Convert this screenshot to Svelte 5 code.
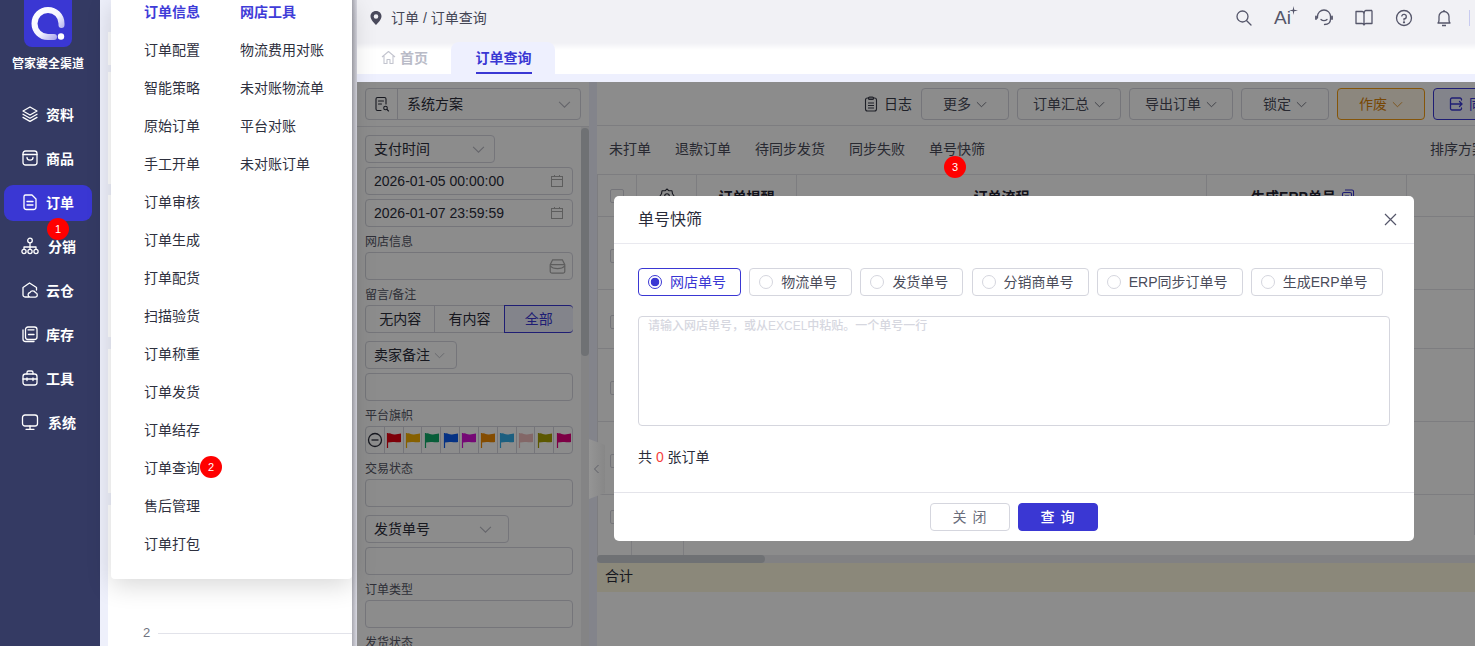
<script>
  const navItems = [
    { t: '资料', i: 'layers' }, { t: '商品', i: 'bag' }, { t: '订单', i: 'doc', active: true },
    { t: '分销', i: 'tree', shift: true }, { t: '云仓', i: 'cloud' }, { t: '库存', i: 'stock' },
    { t: '工具', i: 'box' }, { t: '系统', i: 'screen', shift: true }
  ];
  const menuA = ['订单信息','订单配置','智能策略','原始订单','手工开单','订单审核','订单生成','打单配货','扫描验货','订单称重','订单发货','订单结存','订单查询','售后管理','订单打包'];
  const menuB = ['网店工具','物流费用对账','未对账物流单','平台对账','未对账订单'];
  const flags = ['#e60012','#f5b000','#0fa968','#0a5cf0','#d60fd6','#f08a00','#33aeea','#eebcbc','#a8a000','#e4007f'];
  const radios = ['网店单号','物流单号','发货单号','分销商单号','ERP同步订单号','生成ERP单号'];
  const tools = ['更多','订单汇总','导出订单','锁定'];
  const subTabs = ['未打单','退款订单','待同步发货','同步失败','单号快筛'];
  const rows = [true,false,true,true,false];
</script>

<div class="page">
  <aside class="side">
    <div class="logo">
      <svg width="48" height="47" viewBox="0 0 48 47">
        <defs><linearGradient id="lg" x1="0" y1="0" x2="1" y2="1"><stop offset="0" stop-color="#ffffff"/><stop offset=".55" stop-color="#f4f4ff"/><stop offset="1" stop-color="#9d9ae8"/></linearGradient></defs>
        <path d="M0 0H48V39a8 8 0 0 1-8 8H8a8 8 0 0 1-8-8Z" fill="#3a37d3"/>
        <path d="M37.500 25V23.500A13.500 13.500 0 1 0 24 37H30" fill="none" stroke="url(#lg)" stroke-width="6" stroke-linecap="round"/>
        <circle cx="37" cy="36.500" r="3.200" fill="#fff"/>
      </svg>
    </div>
    <div class="brand">管家婆全渠道</div>
    <nav class="nav">
      {#each navItems as n}
        <div class="nav-item" class:active={n.active} class:shift={n.shift}>
          <svg class="nav-ic" width="18" height="18" viewBox="0 0 18 18" fill="none" stroke="#fff" stroke-width="1.300" stroke-linejoin="round" stroke-linecap="round">
            {#if n.i === 'layers'}
              <path d="M9 2 16 6 9 10 2 6Z"/><path d="M2 9.200 9 13.200 16 9.200"/><path d="M2 12.400 9 16.400 16 12.400"/>
            {:else if n.i === 'bag'}
              <rect x="2" y="2" width="14" height="14" rx="2.500"/><path d="M2 5.500H16"/><path d="M6 8.500C6 12 12 12 12 8.500"/>
            {:else if n.i === 'doc'}
              <path d="M4.500 2H11L15 6V14A2.500 2.500 0 0 1 12.500 16.500H5.500A2.500 2.500 0 0 1 3 14V3.500A1.500 1.500 0 0 1 4.500 2Z"/><path d="M6 8.500H12M6 12H12"/>
            {:else if n.i === 'tree'}
              <circle cx="9" cy="3.500" r="2.300"/><circle cx="3" cy="14.500" r="2.100"/><circle cx="9" cy="14.500" r="2.100"/><circle cx="15" cy="14.500" r="2.100"/><path d="M9 5.800V12.400M3 12.400V10H15V12.400"/>
            {:else if n.i === 'cloud'}
              <path d="M8 16H4A2 2 0 0 1 2 14V6.500L8.500 2 15.500 6.500V9"/><path d="M9 16.200H14.500A2.300 2.300 0 0 0 14.500 11.700 3 3 0 0 0 9 11.500 2.400 2.400 0 0 0 9 16.200Z"/>
            {:else if n.i === 'stock'}
              <path d="M2 5V14A2.500 2.500 0 0 0 4.500 16.500H13"/><rect x="4.500" y="2" width="11.500" height="12.500" rx="2.500"/><path d="M7.500 9.500H13"/><path d="M7 4.800H13"/>
            {:else if n.i === 'box'}
              <rect x="2" y="5" width="14" height="11" rx="2.500"/><path d="M6 5V3.500A1.500 1.500 0 0 1 7.500 2H10.500A1.500 1.500 0 0 1 12 3.500V5"/><path d="M2 10H16M6 9V11.500M12 9V11.500"/>
            {:else}
              <rect x="1.500" y="2" width="15" height="11" rx="2.500"/><path d="M9 13V16M5 16.300H13"/>
            {/if}
          </svg>
          <span>{n.t}</span>
        </div>
      {/each}
    </nav>
  </aside>

  <section class="under">
    <div class="card c1"></div>
    <div class="card c2"></div>
    <div class="card c3"></div>
    <div class="card c4"></div>
    <div class="card c5">
      <div class="axis"><span>2</span><i></i></div>
    </div>
    <div class="menu">
      <div class="menu-col">
        {#each menuA as m, i}
          <div class="menu-item" class:head={i === 0}>{m}</div>
        {/each}
      </div>
      <div class="menu-col">
        {#each menuB as m, i}
          <div class="menu-item" class:head={i === 0}>{m}</div>
        {/each}
      </div>
    </div>
  </section>

  <main class="main">
    <header class="top">
      <div class="crumb">
        <svg width="14" height="16" viewBox="0 0 14 16"><path fill-rule="evenodd" d="M7 1C3.600 1 1.500 3.500 1.500 6.300 1.500 9.800 5.200 13.200 7 15 8.800 13.200 12.500 9.800 12.500 6.300 12.500 3.500 10.400 1 7 1ZM7 4.200A2.300 2.300 0 1 1 7 8.800 2.300 2.300 0 0 1 7 4.200Z" fill="#4a4a5c"/></svg>
        <span>订单 / 订单查询</span>
      </div>
      <div class="top-icons">
        <svg width="20" height="20" viewBox="0 0 20 20" fill="none" stroke="#55566a" stroke-width="1.300" stroke-linecap="round"><circle cx="8.500" cy="8.500" r="5.500"/><path d="M12.700 12.700 17 17"/></svg>
        <span class="ai">Ai<svg width="9" height="9" viewBox="0 0 9 9"><path d="M4.500 0 5.200 3.800 9 4.500 5.200 5.200 4.500 9 3.800 5.200 0 4.500 3.800 3.800Z" fill="#55566a"/></svg></span>
        <svg width="20" height="20" viewBox="0 0 20 20" fill="none" stroke="#55566a" stroke-width="1.300" stroke-linecap="round"><path d="M3.500 10V8.500A6.500 6.500 0 0 1 16.500 8.500V11C16.500 14.500 14 16.500 10.500 16.500"/><path d="M2 8.500V11M18 8.500V11" stroke-width="1.800"/><path d="M7 11.500C8.500 13 11.500 13 13 11.500"/></svg>
        <svg width="20" height="20" viewBox="0 0 20 20" fill="none" stroke="#55566a" stroke-width="1.300" stroke-linejoin="round"><path d="M2 3.500H8C9 3.500 10 4.200 10 5.500V17C10 16 9 15.500 8 15.500H2Z"/><path d="M18 2.500H12C11 2.500 10 4 10 5.500M18 2.500V15.500H12C11 15.500 10 16 10 17"/></svg>
        <svg width="20" height="20" viewBox="0 0 20 20" fill="none" stroke="#55566a" stroke-width="1.300" stroke-linecap="round"><circle cx="10" cy="10" r="7.500"/><path d="M7.800 8A2.300 2.300 0 1 1 10 11V12"/><circle cx="10" cy="14.300" r=".5" fill="#55566a"/></svg>
        <svg width="20" height="20" viewBox="0 0 20 20" fill="none" stroke="#55566a" stroke-width="1.300" stroke-linejoin="round"><path d="M4 15H16C15 14 15 13 15 12V8.500A5 5 0 0 0 5 8.500V12C5 13 5 14 4 15Z"/><path d="M10 2V3.500M8 17.500H12"/></svg>
        <i class="vr"></i>
      </div>
    </header>

    <div class="tabs">
      <div class="tab-home">
        <svg width="15" height="15" viewBox="0 0 15 15" fill="none" stroke="#c3c5cf" stroke-width="1.100" stroke-linejoin="round"><path d="M1 7 7.500 1.500 14 7M3 6V13.500H6V9.500H9V13.500H12V6"/></svg>
        <span>首页</span>
      </div>
      <div class="tab-on"><span>订单查询</span></div>
    </div>

    <div class="strip"></div>

    <div class="content">
      <div class="filters">
        <div class="f-head">
          <div class="plan">
            <span class="plan-ic">
              <svg width="16" height="16" viewBox="0 0 16 16" fill="none" stroke="#2a2c3a" stroke-width="1.100" stroke-linecap="round"><path d="M7 14.500H3.500A1.500 1.500 0 0 1 2 13V3A1.500 1.500 0 0 1 3.500 1.500H10.500A1.500 1.500 0 0 1 12 3V8"/><path d="M4.500 5H9.500M4.500 8H7.500"/><circle cx="11.500" cy="12" r="1.800"/><path d="M13 13.500 14.500 15"/></svg>
            </span>
            <span class="plan-t">系统方案</span>
            <svg class="chev lg" viewBox="0 0 12 12"><path d="M1 3.500 6 8.500 11 3.500"/></svg>
          </div>
        </div>
        <div class="f-body">
          <div class="f-scroll">
            <div class="sel s130"><span>支付时间</span><svg class="chev lg" viewBox="0 0 12 12"><path d="M1 3.500 6 8.500 11 3.500"/></svg></div>
            <div class="inp mt4"><span>2026-01-05 00:00:00</span><svg class="cal" viewBox="0 0 14 14" fill="none" stroke="#aaa" stroke-width="1"><rect x="1.500" y="2.500" width="11" height="10"/><path d="M1.500 5.500H12.500M4.500 1V3M9.500 1V3"/></svg></div>
            <div class="inp mt4"><span>2026-01-07 23:59:59</span><svg class="cal" viewBox="0 0 14 14" fill="none" stroke="#aaa" stroke-width="1"><rect x="1.500" y="2.500" width="11" height="10"/><path d="M1.500 5.500H12.500M4.500 1V3M9.500 1V3"/></svg></div>
            <div class="lab">网店信息</div>
            <div class="inp"><svg class="cal shop" viewBox="0 0 14 14" fill="none" stroke="#aaa" stroke-width="1"><path d="M3 1.500H11L13 5.500V11A1.500 1.500 0 0 1 11.500 12.500H2.500A1.500 1.500 0 0 1 1 11V5.500Z"/><path d="M1 5.500H13M1 6.500C3.500 9.500 10.500 9.500 13 6.500"/></svg></div>
            <div class="lab">留言/备注</div>
            <div class="seg"><span>无内容</span><span>有内容</span><span class="seg-on">全部</span></div>
            <div class="sel s92 mt8"><span>卖家备注</span><svg class="chev lt" viewBox="0 0 12 12"><path d="M1 3.500 6 8.500 11 3.500"/></svg></div>
            <div class="inp mt4"></div>
            <div class="lab">平台旗帜</div>
            <div class="flags">
              <span class="flag"><svg width="16" height="16" viewBox="0 0 16 16" fill="none" stroke="#2a2c3a" stroke-width="1.300"><circle cx="8" cy="8" r="6.500"/><path d="M4.500 8H11.500"/></svg></span>
              {#each flags as c}
                <span class="flag"><svg width="15" height="15" viewBox="0 0 15 15"><path d="M1.500 0V15" stroke={c} stroke-width="1.200"/><path d="M2 .5C5 -.5 6 2 9 1.500 11 1.200 13 1 15 .5V9C12 10 10 8.500 7 9 5 9.300 3.500 9.500 2 9.500Z" fill={c}/></svg></span>
              {/each}
            </div>
            <div class="lab">交易状态</div>
            <div class="inp"></div>
            <div class="sel s144 mt8"><span>发货单号</span><svg class="chev lg" viewBox="0 0 12 12"><path d="M1 3.500 6 8.500 11 3.500"/></svg></div>
            <div class="inp mt4"></div>
            <div class="lab">订单类型</div>
            <div class="inp"></div>
            <div class="lab">发货状态</div>
          </div>
          <div class="vbar"><i></i></div>
        </div>
      </div>

      <div class="gutter"></div>

      <div class="right">
        <div class="toolbar">
          <div class="log">
            <svg width="16" height="16" viewBox="0 0 16 16" fill="none" stroke="#3a3c4a" stroke-width="1.100"><rect x="2.500" y="2" width="11" height="13" rx="2"/><rect x="5.500" y="1" width="5" height="2.500" rx="1"/><path d="M5 7H11M5 9.500H11M5 12H11"/></svg>
            <span>日志</span>
          </div>
          {#each tools as b}
            <div class="btn"><span>{b}</span><svg class="chev" viewBox="0 0 12 12"><path d="M1 3.500 6 8.500 11 3.500"/></svg></div>
          {/each}
          <div class="btn warn"><span>作废</span><svg class="chev" viewBox="0 0 12 12"><path d="M1 3.500 6 8.500 11 3.500"/></svg></div>
          <div class="btn sync">
            <svg width="16" height="16" viewBox="0 0 16 16" fill="none" stroke="#3a37d3" stroke-width="1.300" stroke-linecap="round"><path d="M13.500 4V3.500A1.500 1.500 0 0 0 12 2H4A1.500 1.500 0 0 0 2.500 3.500V12.500A1.500 1.500 0 0 0 4 14H12A1.500 1.500 0 0 0 13.500 12.500V12"/><path d="M3 8H14M11.500 5.500 14 8 11.500 10.500"/></svg>
            <span>同步订单</span>
          </div>
        </div>

        <div class="subtabs">
          {#each subTabs as s}<span>{s}</span>{/each}
          <span class="sort">排序方案</span>
        </div>

        <div class="table">
          <div class="tr th">
            <div class="td"><i class="ck"></i></div>
            <div class="td">
              <svg width="16" height="16" viewBox="0 0 16 16" fill="none" stroke="#2a2c3a" stroke-width="1.100" stroke-linejoin="round"><path d="M8 1 10 2.800 13 2.800 13.500 5.800 15 8 13.500 10.200 13 13.200 10 13.200 8 15 6 13.200 3 13.200 2.500 10.200 1 8 2.500 5.800 3 2.800 6 2.800Z"/><circle cx="8" cy="8" r="2.300"/></svg>
            </div>
            <div class="td b">订单提醒</div>
            <div class="td b">订单流程</div>
            <div class="td b erp">生成ERP单号
              <svg class="copy" width="14" height="14" viewBox="0 0 14 14" fill="none" stroke="#3a37d3" stroke-width="1.100"><rect x="1.500" y="3.500" width="9" height="9.500" rx="1.500"/><path d="M4 1H11A1.500 1.500 0 0 1 12.500 2.500V10"/><path d="M4 7H8M4 9.500H8"/></svg>
            </div>
            <div class="td"></div>
          </div>
          {#each rows as tall, i}
            <div class="tr body" class:tall class:short={!tall} class:last={i === rows.length - 1}>
              <div class="td"><i class="ck"></i></div>
              <div class="td"></div><div class="td"></div><div class="td"></div><div class="td"></div><div class="td"></div>
            </div>
          {/each}
          <div class="hbar"><i></i></div>
          <div class="sum">合计</div>
        </div>
      </div>

      <div class="dim"></div>
      <svg class="handle" width="16" height="60" viewBox="0 0 16 60">
        <defs><linearGradient id="hg" x1="0" x2="1" y1="0" y2="0"><stop offset="0" stop-color="#959595"/><stop offset="1" stop-color="#878787"/></linearGradient></defs>
        <path d="M0 0 16 6V54L0 60Z" fill="url(#hg)"/>
        <path d="M9.500 26 5.500 30 9.500 34" fill="none" stroke="#5f6068" stroke-width="1"/>
      </svg>

      <div class="modal">
        <div class="m-head">
          <span>单号快筛</span>
          <svg width="13" height="13" viewBox="0 0 13 13" stroke="#55566a" stroke-width="1.200"><path d="M1 1 12 12M12 1 1 12"/></svg>
        </div>
        <div class="m-body">
          <div class="radios">
            {#each radios as r, i}
              <label class="radio" class:on={i === 0}><i class="dot"></i><span>{r}</span></label>
            {/each}
          </div>
          <div class="ta">请输入网店单号，或从EXCEL中粘贴。一个单号一行</div>
          <div class="count">共 <em>0</em> 张订单</div>
        </div>
        <div class="m-foot">
          <button class="mb">关 闭</button>
          <button class="mb pri">查 询</button>
        </div>
      </div>
    </div>
  </main>

  <span class="badge b1">1</span>
  <span class="badge b2">2</span>
  <span class="badge b3">3</span>
</div>

<style>
  :global(body) { margin: 0; }
  .page {
    position: relative; display: flex; width: 1475px; height: 646px; overflow: hidden;
    font-family: "Liberation Sans", "Noto Sans CJK SC", sans-serif; font-size: 14px; color: #2a2c3a; background: #fff;
  }
  .side { width: 100px; flex: none; background: #343a63; color: #fff; display: flex; flex-direction: column; align-items: center; }
  .logo { height: 47px; line-height: 0; margin-left: -4px; }
  .brand { margin-top: 9px; font-size: 12px; font-weight: 700; line-height: 17px; margin-left: -4px; }
  .nav { margin-top: 20px; align-self: stretch; display: flex; flex-direction: column; padding: 4px 8px 0 4px; gap: 8px; }
  .nav-item { height: 36px; box-sizing: border-box; padding-bottom: 2px; display: flex; align-items: center; padding-left: 17px; gap: 7px; border-radius: 9px; font-weight: 700; }
  .nav-item.shift span { margin-left: 2px; }
  .nav-item.active { background: #3a37d3; }
  .nav-ic { flex: none; }

  .under { position: relative; width: 257px; flex: none; background: #eef0fb; padding-left: 8px; box-sizing: border-box; display: flex; flex-direction: column; }
  .under::after { content: ""; position: absolute; top: 0; right: 0; bottom: 0; width: 5px; background: linear-gradient(90deg, #a9a9b1, #d9d9e2); }
  .card { background: #fff; }
  .c1 { height: 33px; margin-top: 32px; }
  .c2 { height: 112px; margin-top: 7px; }
  .c3 { height: 142px; margin-top: 11px; }
  .c4 { height: 144px; margin-top: 12px; }
  .c5 { flex: 1; margin-top: 12px; display: flex; flex-direction: column; justify-content: flex-end; }
  .axis { display: flex; align-items: center; padding: 0 0 5px 35px; gap: 8px; font-size: 13px; color: #70727e; line-height: 16px; }
  .axis i { flex: 1; height: 1px; background: #e2e3ea; }
  .menu {
    position: absolute; left: 11px; top: 0; width: 241px; height: 579px; background: #fff; z-index: 2;
    display: flex; padding-left: 33px; box-sizing: border-box; border-radius: 0 0 4px 4px;
    box-shadow: 0 6px 26px rgba(0,0,0,.16);
  }
  .menu-col { width: 96px; margin-top: -7px; }
  .menu-item { height: 38px; line-height: 38px; white-space: nowrap; color: #2e303e; }
  .menu-item.head { color: #3f3cd8; font-weight: 700; }

  .main { flex: 1; min-width: 0; display: flex; flex-direction: column; }
  .top { height: 43px; flex: none; background: #f1f1f5; display: flex; align-items: center; justify-content: space-between; padding-left: 12px; box-sizing: border-box; padding-bottom: 7px; }
  .crumb { display: flex; align-items: center; gap: 8px; color: #444655; }
  .crumb span { padding-bottom: 2px; }
  .top-icons { display: flex; align-items: center; gap: 20px; margin-right: -1px; }
  .top-icons > svg { display: block; }
  .ai { position: relative; width: 20px; font-size: 19px; line-height: 20px; color: #55566a; }
  .ai svg { position: absolute; right: -4px; top: -2px; }
  .vr { width: 1px; height: 16px; background: #c8cbf0; margin-left: -5px; margin-right: 6px; }

  .tabs { height: 31px; flex: none; display: flex; align-items: flex-end; background: linear-gradient(#f1f1f5, #fff 7px); padding-left: 24px; position: relative; }
  .tab-home { height: 31px; box-sizing: border-box; padding-bottom: 3px; display: flex; align-items: center; gap: 4px; width: 70px; color: #b9bbc7; font-weight: 700; }
  .tab-on { width: 104px; height: 32px; background: #eef0fe; border-radius: 8px 8px 0 0; display: flex; justify-content: center; margin-top: -1px; }
  .tab-on span { color: #3a37d3; font-weight: 700; line-height: 32px; height: 30px; border-bottom: 2px solid #3a37d3; margin-left: 1px; }
  .strip { height: 8px; flex: none; background: #eef0fe; }

  .content { position: relative; flex: 1; display: flex; min-height: 0; background: #fff; }
  .filters { width: 232px; flex: none; display: flex; flex-direction: column; min-height: 0; }
  .f-head { height: 45px; flex: none; box-sizing: border-box; padding: 6px 8px; border-bottom: 1px solid #e4e4ea; }
  .plan { height: 32px; box-sizing: border-box; border: 1px solid #d5d6de; border-radius: 4px; display: flex; align-items: center; padding-right: 9px; }
  .plan-ic { width: 31px; height: 30px; border-right: 1px solid #d5d6de; display: flex; align-items: center; justify-content: center; flex: none; }
  .plan-t { flex: 1; padding-left: 9px; padding-bottom: 2px; }
  .f-body { flex: 1; display: flex; min-height: 0; }
  .f-scroll { width: 224px; flex: none; box-sizing: border-box; padding: 8px 8px 0; overflow: hidden; }
  .vbar { width: 8px; background: #f0f0f3; }
  .vbar i { display: block; height: 228px; margin-top: 1px; background: #caced4; border-radius: 4px; }
  .sel, .inp, .seg, .flags { height: 28px; box-sizing: border-box; border: 1px solid #d5d6de; border-radius: 4px; display: flex; align-items: center; }
  .sel { padding: 0 9px 0 8px; justify-content: space-between; }
  .sel span { padding-bottom: 2px; }
  .s130 { width: 130px; }
  .s92 { width: 92px; padding-right: 11px; }
  .s144 { width: 144px; padding-right: 16px; }
  .inp { padding: 0 8px; justify-content: space-between; font-size: 14px; white-space: nowrap; }
  .mt4 { margin-top: 4px; }
  .mt8 { margin-top: 8px; }
  .cal { width: 14px; height: 14px; flex: none; margin-left: auto; }
  .shop { width: 17px; height: 17px; margin-right: -2px; }
  .lab { font-size: 12px; line-height: 17px; margin: 7px 0 1px; color: #555766; }
  .seg span { flex: 1; text-align: center; line-height: 26px; border-right: 1px solid #d5d6de; }
  .seg span:last-child { border-right: 0; }
  .seg .seg-on { height: 28px; margin: -1px; border: 1px solid #3a37d3; border-radius: 0 4px 4px 0; background: #eef0fe; color: #3a37d3; box-sizing: border-box; line-height: 26px; }
  .flag { flex: 1; height: 26px; display: flex; align-items: center; justify-content: center; border-right: 1px solid #d5d6de; }
  .flag:last-child { border-right: 0; }
  .chev { width: 11px; height: 11px; flex: none; fill: none; stroke: #6a6c7a; stroke-width: 1; }
  .chev.lt { stroke: #b8b9c2; }
  .chev.lg { width: 13px; height: 13px; stroke: #b8b9c2; }

  .gutter { width: 8px; flex: none; background: #eef0fe; }
  .right { flex: 1; min-width: 0; overflow: hidden; display: flex; flex-direction: column; }
  .toolbar { height: 44px; flex: none; box-sizing: border-box; border-bottom: 1px solid #e4e4ea; padding-top: 6px; display: flex; align-items: flex-start; justify-content: flex-end; gap: 8px; }
  .log { height: 32px; display: flex; align-items: center; gap: 5px; margin-right: 1px; color: #3a3c4a; }
  .log span { padding-bottom: 2px; }
  .btn { height: 32px; min-width: 88px; flex: none; box-sizing: border-box; padding: 0 15px; border: 1px solid #d5d6de; border-radius: 4px; display: flex; align-items: center; justify-content: center; gap: 5px; color: #4a4c5a; white-space: nowrap; }
  .btn span { padding-bottom: 2px; flex: none; }
  .btn svg { flex: none; }
  .btn.warn { background: #fff6e6; border-color: #f39c12; color: #d9820a; }
  .btn.warn .chev { stroke: #e0962c; }
  .btn.sync { border-color: #3a37d3; background: #eef0fe; color: #3a37d3; margin-right: -46px; justify-content: flex-start; padding-left: 14px; gap: 5px; overflow: hidden; width: 88px; }
  .subtabs { height: 49px; flex: none; box-sizing: border-box; border-bottom: 1px solid #e4e4ea; display: flex; align-items: center; padding: 0 0 4px 12px; gap: 24px; color: #4a4c5a; white-space: nowrap; }
  .sort { margin-left: 421px; }
  .table { flex: 1; min-height: 0; }
  .tr { display: grid; grid-template-columns: 39px 60px 100px 410px 200px 1fr; border-left: 1px solid #e4e4ea; box-sizing: border-box; border-bottom: 1px solid #e4e4ea; }
  .th { height: 42px; }
  .tall { height: 73px; }
  .short { height: 59px; }
  .last { height: 60px; border-bottom: 0; grid-template-columns: 34px 52px 87px 1fr; }
  .td { display: flex; align-items: center; justify-content: center; border-right: 1px solid #e4e4ea; white-space: nowrap; }
  .td.b { font-weight: 700; color: #1f2130; }
  .td.erp { padding-right: 7px; }
  .body .td:first-child { padding-top: 5px; }
  .last .td:first-child { justify-content: flex-start; padding-left: 12px; }
  .copy { margin-left: 5px; }
  .ck { width: 14px; height: 14px; box-sizing: border-box; border: 1px solid #d5d6de; border-radius: 2px; display: block; }
  .hbar { height: 8px; background: #ebecef; }
  .hbar i { display: block; width: 168px; height: 8px; border-radius: 4px; background: #caced4; }
  .sum { height: 29px; background: #fdf8df; line-height: 27px; padding-left: 8px; }

  .dim { position: absolute; inset: 0; background: rgba(0,0,0,.45); z-index: 3; }
  .handle { position: absolute; left: 232px; top: 357px; z-index: 4; }
  .modal { position: absolute; left: 257px; top: 114px; width: 800px; height: 345px; background: #fff; border-radius: 5px; z-index: 5; display: flex; flex-direction: column; }
  .m-head { height: 48px; flex: none; box-sizing: border-box; border-bottom: 1px solid #e9e9ef; display: flex; align-items: center; justify-content: space-between; padding: 0 17px 1px 25px; font-size: 16px; }
  .m-head span { padding-bottom: 2px; margin-left: -1px; }
  .m-body { flex: 1; padding: 24px 24px 0; }
  .radios { display: flex; gap: 8.200px; }
  .radio { height: 28px; box-sizing: border-box; border: 1px solid #d5d6de; border-radius: 4px; display: flex; align-items: center; padding: 0 14px 0 9px; gap: 8px; color: #4a4c5a; white-space: nowrap; }
  .radio span { padding-bottom: 2px; }
  .dot { width: 14px; height: 14px; box-sizing: border-box; border: 1px solid #d5d6de; border-radius: 50%; display: block; flex: none; }
  .radio.on { border-color: #3a37d3; color: #3a37d3; }
  .radio.on .dot { border-color: #3a37d3; background: radial-gradient(circle, #3a37d3 0 4px, #fff 4.600px); }
  .ta { height: 110px; box-sizing: border-box; margin-top: 20px; border: 1px solid #d5d6de; border-radius: 4px; padding: 2px 9px; font-size: 12px; font-weight: 500; line-height: 14px; color: #d6d7df; }
  .count { margin-top: 21px; line-height: 20px; }
  .count em { font-style: normal; color: #f5423c; }
  .m-foot { height: 49px; flex: none; box-sizing: border-box; border-top: 1px solid #e4e4ea; padding-top: 10px; display: flex; justify-content: center; gap: 8px; }
  .mb { width: 80px; height: 28px; box-sizing: border-box; border: 1px solid #d5d6de; border-radius: 4px; background: #fff; font: inherit; color: #6a6c7a; padding: 0 0 2px; letter-spacing: 1px; }
  .mb.pri { background: #3a37d3; border-color: #3a37d3; color: #fff; font-weight: 500; }

  .badge { position: absolute; width: 22px; height: 22px; border-radius: 50%; background: #ff0000; color: #fff; font-size: 11px; line-height: 22px; text-align: center; z-index: 9; font-family: "Liberation Sans", sans-serif; }
  .b1 { left: 47px; top: 218px; }
  .b2 { left: 200px; top: 456px; }
  .b3 { left: 944px; top: 156px; }
</style>
